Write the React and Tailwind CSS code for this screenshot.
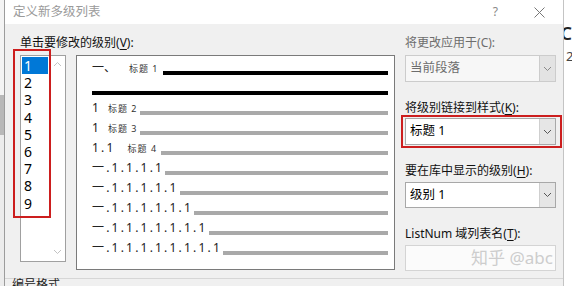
import React from "react";

const FONT = "font-['Noto_Sans','Noto_Sans_CJK_SC',sans-serif]";

const previewRows = [
  { num: "一、", tag: "标题 1", tagMl: "ml-[13px]", lineMl: "ml-[4px]", dark: true },
  { dark: true },
  { num: "1", tag: "标题 2", tagMl: "ml-[9px]", lineMl: "ml-[3px]" },
  { num: "1", tag: "标题 3", tagMl: "ml-[9px]", lineMl: "ml-[3px]" },
  { num: "1.1", tag: "标题 4", tagMl: "ml-[12px]", lineMl: "ml-[4px]", wide: true },
  { num: "一.1.1.1.1", wide: true, lineMl: "ml-[1px]" },
  { num: "一.1.1.1.1.1", wide: true, lineMl: "ml-[1px]" },
  { num: "一.1.1.1.1.1.1", wide: true, lineMl: "ml-[1px]" },
  { num: "一.1.1.1.1.1.1.1", wide: true, lineMl: "ml-[1px]" },
  { num: "一.1.1.1.1.1.1.1.1", wide: true, lineMl: "ml-[1px]" },
];

function Chevron({ color = "#606060" }) {
  return (
    <svg width="9" height="6" viewBox="0 0 9 6">
      <polyline points="1,1 4.5,4.5 8,1" fill="none" stroke={color} strokeWidth="1" />
    </svg>
  );
}

function Label({ text, k, u = true, muted }) {
  return (
    <div className={`h-[17px] leading-[17px] text-[12px] whitespace-nowrap ${muted ? "text-[#6d6d6d]" : "text-[#111]"}`}>
      {text}(<span className={u ? "underline underline-offset-2" : ""}>{k}</span>):
    </div>
  );
}

function Combo({ text, disabled, h = "h-[27px]" }) {
  return (
    <div className={`flex ${h} border ${disabled ? "border-[#cccccc] bg-[#f7f7f7] text-[#6d6d6d]" : "border-[#a8a8a8] bg-white text-black"}`}>
      <div className="flex-1 flex items-center pl-[4px] text-[12.5px] leading-none">{text}</div>
      <div className={`w-[16px] flex items-center justify-center border-l ${disabled ? "bg-[#e3e3e3] border-[#cccccc]" : "bg-[#e6e6e6] border-[#cfcfcf]"}`}>
        <Chevron color={disabled ? "#8a8a8a" : "#555"} />
      </div>
    </div>
  );
}

export default function App() {
  return (
    <div className={`relative flex w-[572px] h-[286px] overflow-hidden bg-white ${FONT}`}>
      {/* background window on the left */}
      <div className="w-[4px] shrink-0 flex flex-col bg-[#ececec]">
        <div className="h-[95px] shrink-0 bg-[#f4f4f4]" />
        <div className="h-[40px] shrink-0 bg-[#b8b8b8]" />
      </div>

      {/* dialog */}
      <div className="w-[560px] shrink-0 flex flex-col overflow-hidden border-x border-l-[#9c9c9c] border-r-[#c4c4c4] bg-[#f0f0f0]">
        <div className="h-[24px] shrink-0 flex items-center bg-white pl-[8px] pr-[18px]">
          <div className="flex-1 text-[12.5px] text-[#9a9a9a] leading-[16px]">定义新多级列表</div>
          <span className="text-[12px] text-[#888] mr-[36px] leading-[16px]">?</span>
          <svg width="11" height="11" viewBox="0 0 11 11">
            <path d="M0.5 0.5 L10.5 10.5 M10.5 0.5 L0.5 10.5" stroke="#777" strokeWidth="1" />
          </svg>
        </div>

        <div className="shrink-0 flex gap-[10px] pl-[15px] pt-[10px]">
          {/* left column */}
          <div className="w-[375px] flex flex-col">
            <Label text="单击要修改的级别" k="V" />
            <div className="flex gap-[10px] mt-[4px]">
              <div className="w-[46px] h-[207px] flex border border-[#a0a0a0] bg-white">
                <div className="w-[28px] flex flex-col pt-px pl-px">
                  {["1", "2", "3", "4", "5", "6", "7", "8", "9"].map((n, i) => (
                    <div
                      key={n}
                      className={`h-[17.2px] shrink-0 w-[26px] pl-[2px] text-[14px] leading-[17px] ${i === 0 ? "bg-[#0078d7] text-white" : "text-black"}`}
                    >
                      {n}
                    </div>
                  ))}
                </div>
                <div className="flex-1 flex flex-col items-center justify-between pt-[5px] pb-[6px]">
                  <svg width="9" height="6" viewBox="0 0 9 6">
                    <polyline points="1,5 4.5,1.5 8,5" fill="none" stroke="#c2c2c2" strokeWidth="1" />
                  </svg>
                  <Chevron color="#c2c2c2" />
                </div>
              </div>

              <div className="w-[319px] h-[215px] border border-[#7a7a7a] bg-white pt-[7px] pl-[15px] pr-[6px] flex flex-col">
                {previewRows.map((r, i) => (
                  <div key={i} className="h-[20px] shrink-0 flex items-start">
                    {r.num && (
                      <span className={`h-[10px] leading-[10px] text-[12px] text-[#222] whitespace-nowrap ${r.wide ? "tracking-[2.2px]" : ""}`}>
                        {r.num}
                      </span>
                    )}
                    {r.tag && (
                      <span className={`mt-[1px] h-[10px] leading-[10px] text-[9px] tracking-[1px] text-[#333] whitespace-nowrap ${r.tagMl}`}>
                        {r.tag}
                      </span>
                    )}
                    <div className={`flex-1 mt-[8px] h-[4px] ${r.dark ? "bg-black" : "bg-[#a9a9a9]"} ${r.lineMl || ""}`} />
                  </div>
                ))}
              </div>
            </div>
          </div>

          {/* right column */}
          <div className="w-[151px] flex flex-col">
            <Label text="将更改应用于" k="C" u={false} muted />
            <div className="mt-[4px]">
              <Combo text="当前段落" disabled />
            </div>
            <div className="mt-[17px]">
              <Label text="将级别链接到样式" k="K" />
            </div>
            <div className="mt-[2px]">
              <Combo text="标题 1" />
            </div>
            <div className="mt-[17px]">
              <Label text="要在库中显示的级别" k="H" />
            </div>
            <div className="mt-[3px]">
              <Combo text="级别 1" h="h-[26px]" />
            </div>
            <div className="mt-[17px] h-[17px] leading-[17px] text-[12px] text-[#111] whitespace-nowrap">
              ListNum 域列表名(<span className="underline underline-offset-2">T</span>):
            </div>
            <div className="mt-[3px] h-[26px] border border-[#d4d4d4] bg-[#fbfbfb]" />
          </div>
        </div>

        <div className="shrink-0 mt-[7px] h-px bg-[#d6d6d6]" />
        <div className="shrink-0 pl-[7px] text-[12px] leading-[12px] text-[#222]">编号格式</div>
      </div>

      {/* background window on the right */}
      <div className="flex-1 flex flex-col bg-white overflow-hidden">
        <div className="h-[24px] shrink-0" />
        <div className="h-[18px] shrink-0 flex justify-end items-center text-[18px] font-semibold text-[#222] leading-none">C</div>
        <div className="mt-[8px] pl-[2px] text-[13px] text-[#444] leading-none">2</div>
      </div>

      {/* annotations */}
      <div className="absolute left-[13px] top-[49px] w-[38px] h-[169px] border-2 border-[#cc1e1e]" />
      <div className="absolute left-[401px] top-[115px] w-[161px] h-[33px] border-2 border-[#cc1e1e]" />
      <div className="absolute left-[471px] top-[247px] w-[86px] h-[22px] overflow-hidden">
        <div className="text-[17px] leading-[22px] text-[#cdcdcd] whitespace-nowrap">知乎 @abc</div>
      </div>
    </div>
  );
}
